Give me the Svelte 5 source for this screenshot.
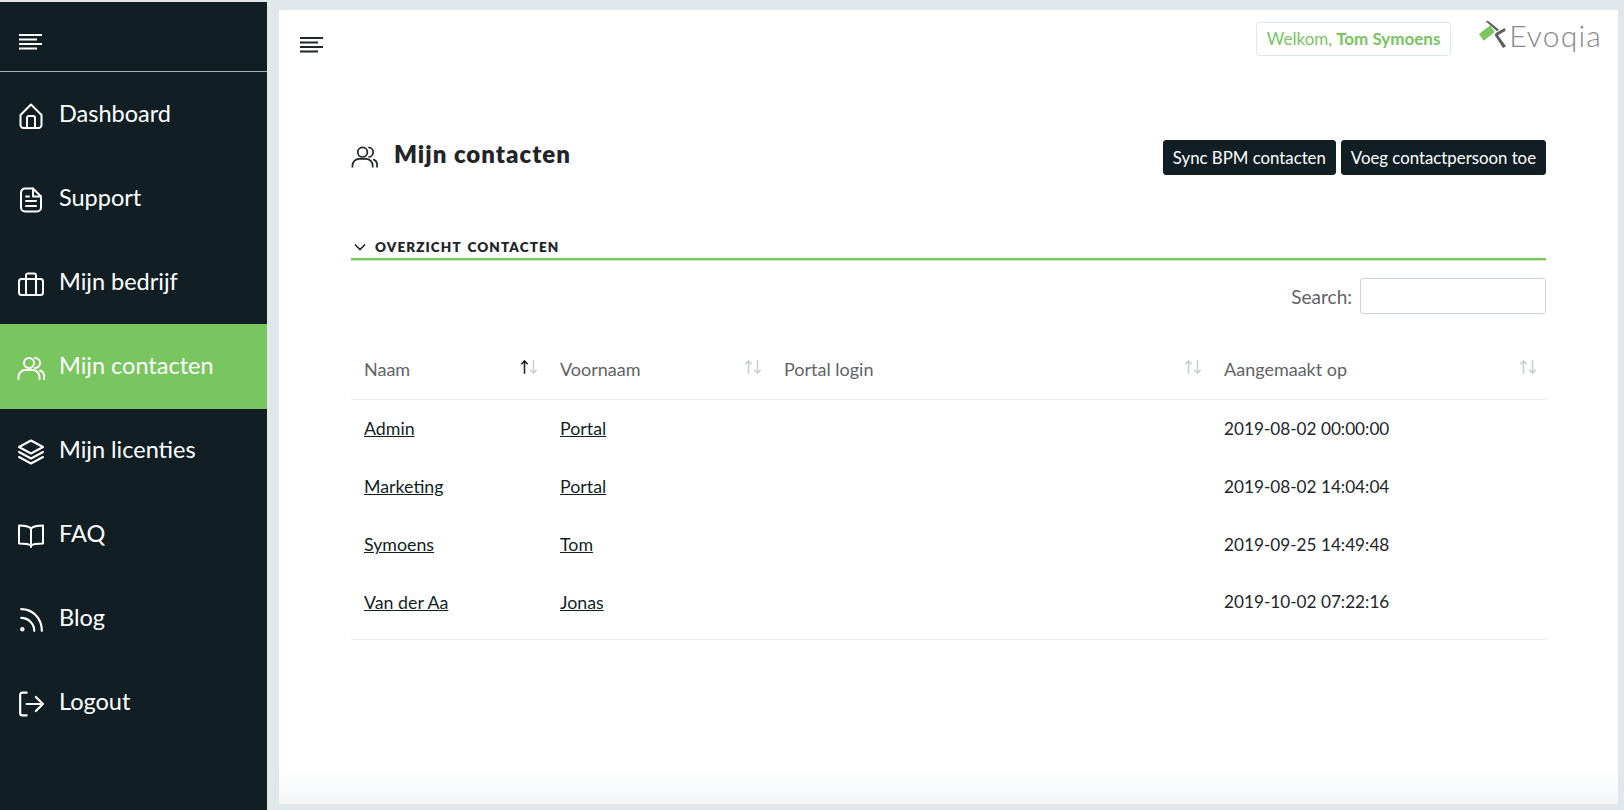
<script>
  const nav = [
    { label: 'Dashboard', icon: 'home' },
    { label: 'Support', icon: 'doc' },
    { label: 'Mijn bedrijf', icon: 'case' },
    { label: 'Mijn contacten', icon: 'users', active: true },
    { label: 'Mijn licenties', icon: 'layers' },
    { label: 'FAQ', icon: 'book' },
    { label: 'Blog', icon: 'rss' },
    { label: 'Logout', icon: 'logout' }
  ];
  const rows = [
    ['Admin', 'Portal', '2019-08-02 00:00:00'],
    ['Marketing', 'Portal', '2019-08-02 14:04:04'],
    ['Symoens', 'Tom', '2019-09-25 14:49:48'],
    ['Van der Aa', 'Jonas', '2019-10-02 07:22:16']
  ];
  const cols = [
    { label: 'Naam', w: 196, active: true },
    { label: 'Voornaam', w: 224 },
    { label: 'Portal login', w: 440 },
    { label: 'Aangemaakt op', w: 335 }
  ];
</script>

{#snippet burger()}
  <svg class="burger" viewBox="0 0 23 16" aria-hidden="true">
    <path d="M0 1h23M0 5.500h18M0 10h23M0 14.500h18" />
  </svg>
{/snippet}

{#snippet usersIcon(cls)}
  <svg class={cls} viewBox="0 0 28 24" aria-hidden="true">
    <circle cx="12" cy="7" r="5" />
    <path d="M1.500 23v-2a7 7 0 0 1 7-7h7a7 7 0 0 1 7 7v2M18 2a5 5 0 0 1 0 10M23 14.500a6 6 0 0 1 4 6V23" />
  </svg>
{/snippet}

{#snippet sortIcon(active)}
  <svg class="sort" class:on={active} viewBox="0 0 16 14" aria-hidden="true">
    <path class="up" d="M4 13V1.500M1.200 4.500 4 1.500l2.800 3" />
    <path class="down" d="M12 1v11.500M9.200 9.500l2.800 3 2.800-3" />
  </svg>
{/snippet}

<div class="page">
  <aside class="sidebar">
    <div class="side-head">{@render burger()}</div>
    <nav>
      {#each nav as item}
        <a class="nav-item" class:active={item.active} href="#top">
          <span class="nav-icon">
            {#if item.icon === 'home'}
              <svg viewBox="0 0 24 26"><path d="M1.500 12 12 1.500 22.500 12v10a3 3 0 0 1-3 3h-15a3 3 0 0 1-3-3z" /><path d="M8 25V15a2 2 0 0 1 2-2h4a2 2 0 0 1 2 2v10" /></svg>
            {:else if item.icon === 'doc'}
              <svg viewBox="0 0 24 26"><path d="M14 1.500H6a4 4 0 0 0-4 4v15a4 4 0 0 0 4 4h12a4 4 0 0 0 4-4V9.500z" /><path d="M14 1.500v8h8M7 9.500h3M7 14h10M7 19h10" /></svg>
            {:else if item.icon === 'case'}
              <svg viewBox="0 0 26 24"><rect x="1" y="7" width="24" height="16" rx="2.500" /><path d="M8 23V3.500a2 2 0 0 1 2-2h6a2 2 0 0 1 2 2V23" /></svg>
            {:else if item.icon === 'users'}
              {@render usersIcon('users-svg')}
            {:else if item.icon === 'layers'}
              <svg viewBox="0 0 26 26"><path d="M13 1.500 25 8l-12 6.500L1 8z" /><path d="M1 13l12 6.500L25 13M1 18l12 6.500L25 18" /></svg>
            {:else if item.icon === 'book'}
              <svg viewBox="0 0 26 24"><path d="M13 4.500c-2-2-5-3-12-3v18c7 0 10 .5 12 2 2-1.500 5-2 12-2v-18c-7 0-10 1-12 3zM13 4.500V23" /></svg>
            {:else if item.icon === 'rss'}
              <svg viewBox="0 0 24 24"><path d="M3 2c10.500 0 19 8.500 19 20M3 10c6.600 0 12 5.400 12 12" /><circle class="solid" cx="4" cy="20.500" r="2" /></svg>
            {:else}
              <svg viewBox="0 0 24 24"><path d="M8 1.500H4a2 2 0 0 0-2 2v17a2 2 0 0 0 2 2h4M8 12h15M16.500 5.500 23 12l-6.500 6.500" /></svg>
            {/if}
          </span>
          <span>{item.label}</span>
        </a>
      {/each}
    </nav>
  </aside>

  <main class="panel">
    <header class="topbar">
      <span class="top-burger">{@render burger()}</span>
      <div class="top-right">
        <div class="welcome">Welkom, <strong>Tom Symoens</strong></div>
        <div class="logo">
          <svg viewBox="5 2 30 30" aria-hidden="true">
            <path class="lg" d="M6 16 17.300 7.300 21.700 14 10.700 22.700z" />
            <path class="ld" d="M12.700 3.300 15 2.700 26 11.700 24 13.300z" />
            <path class="ld" d="M22.700 15 31.700 10 32.700 12.700 25 17.300 33 28.300 30 30 21.700 17.300z" />
          </svg>
          <span>Evoqia</span>
        </div>
      </div>
    </header>

    <section class="content">
      <div class="title-row">
        <h1>{@render usersIcon('title-icon')}Mijn contacten</h1>
        <div class="actions">
          <button>Sync BPM contacten</button>
          <button>Voeg contactpersoon toe</button>
        </div>
      </div>

      <h2>
        <svg viewBox="0 0 12 8" aria-hidden="true"><path d="M1 1.500 6 6.500l5-5" /></svg>
        OVERZICHT CONTACTEN
      </h2>

      <div class="search">
        <label for="s">Search:</label>
        <input id="s" type="text" />
      </div>

      <table>
        <colgroup>
          {#each cols as c}<col style="width:{c.w}px" />{/each}
        </colgroup>
        <thead>
          <tr>
            {#each cols as c}
              <th>{c.label}{@render sortIcon(c.active)}</th>
            {/each}
          </tr>
        </thead>
        <tbody>
          {#each rows as r}
            <tr>
              <td><a href="#top">{r[0]}</a></td>
              <td><a href="#top">{r[1]}</a></td>
              <td></td>
              <td class="date">{r[2]}</td>
            </tr>
          {/each}
        </tbody>
      </table>
    </section>
    <div class="fade"></div>
  </main>
</div>

<style>
  :global(body) {
    margin: 0;
    background: #dfe7ea;
    font-family: Lato, "Open Sans", sans-serif;
  }
  .page {
    display: flex;
    height: 810px;
    overflow: hidden;
    background: #dfe7ea;
    color: #212529;
  }
  .sidebar {
    width: 267px;
    flex: none;
    margin-top: 2px;
    background: #111f25;
    color: #fff;
  }
  .side-head {
    height: 69px;
    border-bottom: 1px solid #a6b0b2;
    display: flex;
    align-items: center;
    padding-left: 19px;
  }
  .burger {
    width: 23px;
    height: 16px;
    fill: none;
    stroke: currentColor;
    stroke-width: 1.800;
    display: block;
  }
  .side-head .burger { margin-top: 10px; }
  nav { display: flex; flex-direction: column; }
  .nav-item {
    height: 84px;
    display: flex;
    align-items: center;
    color: #fff;
    text-decoration: none;
    font-size: 23.500px;
    padding-bottom: 2px;
    box-sizing: border-box;
  }
  .nav-item.active {
    background: #79c55f;
    height: 85px;
    margin-bottom: -1px;
    padding-bottom: 3px;
  }
  .nav-icon {
    width: 59px;
    flex: none;
    display: flex;
    justify-content: center;
    padding-left: 2px;
    margin-top: 6px;
    box-sizing: border-box;
  }
  .nav-icon svg {
    width: 26px;
    height: 26px;
    fill: none;
    stroke: currentColor;
    stroke-width: 2;
    stroke-linecap: round;
    stroke-linejoin: round;
  }
  .nav-icon svg .solid { fill: currentColor; stroke: none; }
  .panel {
    position: relative;
    flex: none;
    width: 1339px;
    height: 794px;
    margin: 10px 0 0 12px;
    background: #fff;
  }
  .fade {
    position: absolute;
    left: 0;
    right: 0;
    bottom: 0;
    height: 34px;
    background: linear-gradient(to bottom, rgba(245,247,248,0), #f3f5f6);
    pointer-events: none;
  }
  .topbar {
    display: flex;
    justify-content: space-between;
    padding: 12px 16px 0 21px;
  }
  .top-burger { padding-top: 15px; color: #1f2529; }
  .top-right { display: flex; align-items: flex-start; }
  .welcome {
    width: 195px;
    height: 34px;
    box-sizing: border-box;
    border: 1px solid #dfe7ea;
    border-radius: 3px;
    color: #79c55f;
    font-size: 17px;
    padding-bottom: 2px;
    display: flex;
    align-items: center;
    justify-content: center;
    gap: 4px;
  }
  .welcome strong { font-weight: 700; }
  .logo {
    display: flex;
    align-items: center;
    margin: -2px 0 0 27px;
    color: #87898b;
    font-size: 30px;
    font-weight: 300;
    gap: 1px;
    height: 30px;
    letter-spacing: 1.200px;
  }
  .logo svg { width: 30px; height: 30px; }
  .lg { fill: #79c55f; }
  .ld { fill: #5d6063; }
  .content {
    padding: 0 72px;
    margin-top: 83px;
  }
  .title-row {
    display: flex;
    justify-content: space-between;
    align-items: flex-start;
  }
  h1 {
    margin: -1px 0 0;
    font-size: 24px;
    font-weight: 800;
    letter-spacing: 1px;
    display: flex;
    align-items: center;
    gap: 16px;
    color: #212529;
    height: 30px;
  }
  :global(.title-icon) {
    width: 27px;
    height: 24px;
    fill: none;
    stroke: currentColor;
    stroke-width: 1.800;
    margin-top: 8px;
  }
  :global(.users-svg) {
    fill: none;
    stroke: currentColor;
    stroke-width: 2;
    stroke-linecap: round;
  }
  .nav-item :global(.users-svg) { width: 28px; height: 24px; }
  .actions { display: flex; gap: 5px; margin-top: 1px; }
  button {
    height: 35px;
    padding: 0 9px;
    background: #111f25;
    border: 1px solid #111f25;
    border-radius: 3px;
    color: #fff;
    font: 400 16.800px Lato, sans-serif;
  }
  h2 {
    margin: 63px 0 0;
    padding-bottom: 2px;
    border-bottom: 2px solid #79c55f;
    box-shadow: 0 1px 0 rgba(121, 197, 95, .4);
    height: 18px;
    font-size: 13.500px;
    line-height: 18px;
    letter-spacing: 1.100px;
    font-weight: 800;
    word-spacing: 2px;
    color: #212529;
    display: flex;
    align-items: center;
    gap: 9px;
    box-sizing: content-box;
  }
  h2 svg {
    width: 12px;
    height: 8px;
    margin-left: 3px;
    fill: none;
    stroke: currentColor;
    stroke-width: 1.600;
  }
  .search {
    display: flex;
    justify-content: flex-end;
    align-items: center;
    gap: 8px;
    margin-top: 18px;
    font-size: 19px;
    color: #5f6366;
  }
  .search input {
    width: 186px;
    height: 36px;
    box-sizing: border-box;
    border: 1px solid #ccd5de;
    border-radius: 3px;
    outline: none;
  }
  table {
    width: 1195px;
    table-layout: fixed;
    border-collapse: collapse;
    margin-top: 25px;
  }
  th {
    position: relative;
    height: 60px;
    padding: 0 13px;
    box-sizing: border-box;
    text-align: left;
    font-size: 18px;
    font-weight: 400;
    color: #5f6366;
    border-bottom: 1px solid #e9edf0;
  }
  .sort {
    position: absolute;
    right: 9px;
    top: 20px;
    width: 18px;
    height: 16px;
    fill: none;
    stroke: #c9cdd0;
    stroke-width: 1.400;
  }
  .sort.on .up { stroke: #212529; }
  td {
    height: 58px;
    padding: 0 13px;
    box-sizing: border-box;
    font-size: 17.800px;
    color: #212529;
  }
  td.date { font-size: 17.200px; }
  tbody tr:last-child td {
    border-bottom: 1px solid #e9edf0;
    height: 66px;
    padding-bottom: 8px;
  }
  td a { color: #111f25; text-decoration: underline; }
</style>
